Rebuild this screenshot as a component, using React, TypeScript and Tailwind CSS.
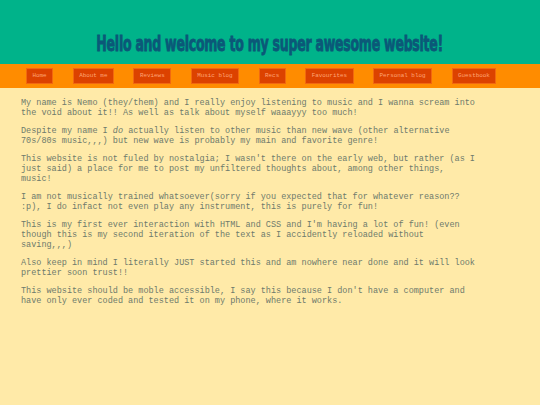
const navLinks = ['Home', 'About me', 'Reviews', 'Music blog', 'Recs', 'Favourites', 'Personal blog', 'Guestbook']

const mono = { fontFamily: '"Liberation Mono", "DejaVu Sans Mono", monospace' }

export default function App() {
  return (
    <div className="min-h-[405px] bg-[#ffeaa8]" style={mono}>
      {/* Header */}
      <header className="h-[64px] bg-[#00b38a] flex items-end justify-center pb-[9px]">
        <h1
          className="inline-block whitespace-nowrap text-[21px] leading-none font-bold text-[#0b5878] tracking-[-0.4px] scale-x-[0.665] [-webkit-text-stroke:0.8px_#0b5878]"
          style={{ fontFamily: '"DejaVu Sans Condensed", "Liberation Sans Narrow", sans-serif' }}
        >
          Hello and welcome to my super awesome website!
        </h1>
      </header>

      {/* Nav */}
      <nav className="h-[24px] bg-[#ff8c00] flex items-center pl-[26px] gap-[19.5px]">
        {navLinks.map(link => (
          <a
            key={link}
            href="#"
            className="h-[16px] px-[5.5px] flex items-center bg-[#dc4200] border border-[#f2680f] text-[#ffa576] text-[5.9px]"
          >
            {link}
          </a>
        ))}
      </nav>

      {/* Content */}
      <main className="pl-[21px] pt-[11px] max-w-[478px] text-[8.5px] leading-[9.6px] text-[#6e7a6c] space-y-[9px]">
        <p>
          My name is Nemo (they/them) and I really enjoy listening to music and I wanna scream into the void about it!! As well as talk about myself waaayyy too much!
        </p>
        <p>
          Despite my name I <i>do</i> actually listen to other music than new wave (other alternative 70s/80s music,,,) but new wave is probably my main and favorite genre!
        </p>
        <p>
          This website is not fuled by nostalgia; I wasn't there on the early web, but rather (as I just said) a place for me to post my unfiltered thoughts about, among other things, music!
        </p>
        <p>
          I am not musically trained whatsoever(sorry if you expected that for whatever reason?? :p), I do infact not even play any instrument, this is purely for fun!
        </p>
        <p>
          This is my first ever interaction with HTML and CSS and I'm having a lot of fun! (even though this is my second iteration of the text as I accidently reloaded without saving,,,)
        </p>
        <p>
          Also keep in mind I literally JUST started this and am nowhere near done and it will look prettier soon trust!!
        </p>
        <p>
          This website should be moble accessible, I say this because I don't have a computer and have only ever coded and tested it on my phone, where it works.
        </p>
      </main>
    </div>
  )
}
